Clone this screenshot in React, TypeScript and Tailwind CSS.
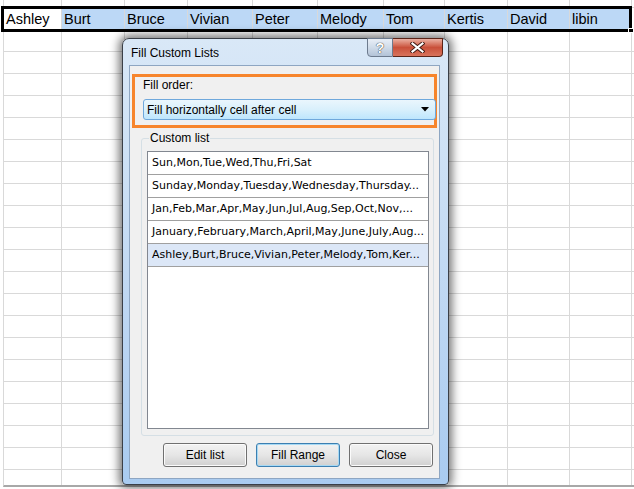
import React from 'react';

const colWidths = [58, 63, 63, 65, 65, 66, 61, 63, 62, 62];
const names = ['Ashley', 'Burt', 'Bruce', 'Vivian', 'Peter', 'Melody', 'Tom', 'Kertis', 'David', 'libin'];

const lists = [
  'Sun,Mon,Tue,Wed,Thu,Fri,Sat',
  'Sunday,Monday,Tuesday,Wednesday,Thursday...',
  'Jan,Feb,Mar,Apr,May,Jun,Jul,Aug,Sep,Oct,Nov,...',
  'January,February,March,April,May,June,July,Aug...',
  'Ashley,Burt,Bruce,Vivian,Peter,Melody,Tom,Ker...',
];

const SheetRow: React.FC<{ height: string; selected?: boolean }> = ({ height, selected }) => (
  <div className={`flex ${height} border-b border-[#d9d9d9]`}>
    {colWidths.map((w, i) => (
      <div
        key={i}
        style={{ width: w }}
        className={`shrink-0 border-r border-[#d9d9d9] pl-[2px] pt-[2px] flex items-center text-[14.5px] text-black ${
          selected && i > 0 ? 'bg-[#bcd8f6]' : ''
        }`}
      >
        {selected ? names[i] : null}
      </div>
    ))}
  </div>
);

const DlgButton: React.FC<{ label: string; primary?: boolean }> = ({ label, primary }) => (
  <button
    className={`w-[84px] h-[24px] rounded-[3px] border text-[12px] text-black flex items-center justify-center font-['Liberation_Sans',Arial,sans-serif] ${
      primary
        ? 'border-[#3c7fb1] shadow-[inset_0_0_0_1px_#a6d9f4] bg-gradient-to-b from-[#f2f2f2] via-[#e6e6e6] to-[#d0d0d0]'
        : 'border-[#707070] shadow-[inset_0_0_0_1px_#fbfbfb] bg-gradient-to-b from-[#f2f2f2] via-[#e6e6e6] to-[#d0d0d0]'
    }`}
  >
    {label}
  </button>
);

export default function App() {
  return (
    <div className="relative w-[634px] h-[489px] bg-white overflow-hidden font-['Liberation_Sans',Arial,sans-serif]">
      {/* spreadsheet grid */}
      <div className="ml-[3px] h-[487px] border-l border-[#d9d9d9] border-b-2 border-b-[#a8a8a8] overflow-hidden">
        <SheetRow height="h-[8px]" />
        <SheetRow height="h-[22px]" selected />
        {Array.from({ length: 21 }).map((_, i) => (
          <SheetRow key={i} height="h-[22px]" />
        ))}
      </div>

      {/* selection outline */}
      <div className="absolute left-[1px] top-[6px] w-[631px] h-[26px] border-[3px] border-black" />
      <div className="absolute left-[628px] top-[28px] w-[6px] h-[5px] bg-black border border-white" />

      {/* dialog */}
      <div className="absolute left-[122px] top-[38px] w-[327px] h-[447px] rounded-t-[7px] rounded-b-[4px] border border-[#3a3f47] bg-gradient-to-b from-[#d9e8f7] via-[#c3daf3] to-[#a9cbf0] shadow-[0_0_10px_3px_rgba(0,0,0,0.55)] flex flex-col">
        <div className="h-[26px] flex items-start relative">
          <span className="pl-[8px] pt-[6px] text-[12px] text-black leading-[16px]">
            Fill Custom Lists
          </span>
          <div className="absolute left-[244px] top-[-1px] flex">
            <div className="w-[26px] h-[19px] rounded-bl-[4px] border border-[#6d7b8e] bg-gradient-to-b from-[#e9eff7] via-[#cfdbe9] to-[#b3c3d7] flex items-center justify-center">
              <span className="text-[14px] font-bold text-white leading-none [text-shadow:0_0_1px_#333,0_0_1px_#333]">?</span>
            </div>
            <div className="w-[50px] h-[19px] rounded-br-[4px] border border-l-0 border-[#5a2418] bg-gradient-to-b from-[#eab0a2] via-[#c9503a] to-[#d8735c] flex items-center justify-center">
              <svg width="15" height="11" viewBox="0 0 15 11">
                <path d="M2.5 1.5 L12.5 9.5 M12.5 1.5 L2.5 9.5" stroke="#3b1710" strokeWidth="4" strokeLinecap="square" />
                <path d="M2.5 1.5 L12.5 9.5 M12.5 1.5 L2.5 9.5" stroke="#ffffff" strokeWidth="2.2" strokeLinecap="square" />
              </svg>
            </div>
          </div>
        </div>

        <div className="ml-[6px] mr-[8px] h-[414px] border border-[#8ea6c2] bg-[#f0f0f0] text-[12px] text-black">
          {/* fill order */}
          <div className="ml-[2px] mt-[8px] w-[305px] h-[54px] border-[3px] border-[#f7852c] pl-[8px] pt-[1px]">
            <div className="leading-[14px]">Fill order:</div>
            <div className="mt-[7px] w-[293px] h-[21px] rounded-[3px] border border-[#6fa8dc] bg-gradient-to-b from-[#eaf6fd] via-[#d9f0fc] to-[#bee6fd] flex items-center justify-between pl-[3px] pr-[6px]">
              <span>Fill horizontally cell after cell</span>
              <svg width="8" height="5" viewBox="0 0 8 5">
                <path d="M0 0 H8 L4 4.5 Z" fill="#000" />
              </svg>
            </div>
          </div>

          {/* custom list group */}
          <div className="relative ml-[11px] mt-[10px] w-[293px] h-[298px] border border-[#d5dfe5] rounded-[3px] pt-[12px] pl-[5px]">
            <span className="absolute left-[7px] top-[-8px] bg-[#f0f0f0] px-[1px] leading-[14px]">Custom list</span>
            <div className="w-[282px] h-[278px] border border-[#828790] bg-white font-['DejaVu_Sans',sans-serif] text-[11px]">
              {lists.map((t, i) => (
                <div
                  key={i}
                  className={`h-[23px] border-b border-[#a0a0a0] pl-[4px] flex items-center whitespace-nowrap overflow-hidden ${
                    i === 4 ? 'bg-[#dce7f7]' : ''
                  }`}
                >
                  {t}
                </div>
              ))}
            </div>
          </div>

          {/* buttons */}
          <div className="flex gap-[9px] ml-[33px] mt-[7px]">
            <DlgButton label="Edit list" />
            <DlgButton label="Fill Range" primary />
            <DlgButton label="Close" />
          </div>
        </div>
      </div>
    </div>
  );
}
